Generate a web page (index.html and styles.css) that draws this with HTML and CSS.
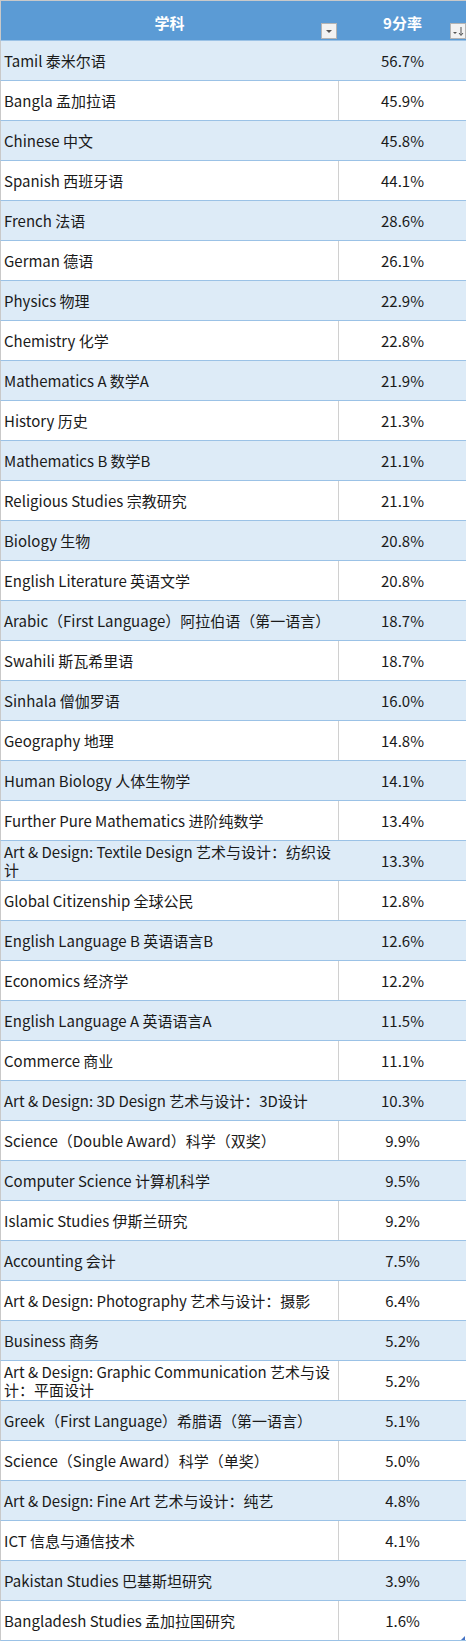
FILE: index.html
```html
<!DOCTYPE html>
<html lang="zh">
<head>
<meta charset="utf-8">
<title>9分率</title>
<link rel="stylesheet" href="styles.css">
</head>
<body>
<div class="sheet">
  <div class="head">
    <div class="hcell subj">学科
      <span class="fbtn fb1"><svg width="14" height="14" viewBox="0 0 14 14"><path d="M4 6 L10 6 L7 9 Z" fill="#555"/></svg></span>
    </div>
    <div class="hcell pct">9分率
      <span class="fbtn fb2"><svg width="14" height="14" viewBox="0 0 14 14"><path d="M2 8 L6 8 L4 10 Z" fill="#555"/><path d="M10 3 L10 11" stroke="#555" stroke-width="1"/><path d="M8 9 L10 11.5 L12 9" fill="none" stroke="#555" stroke-width="1"/></svg></span>
    </div>
  </div>
  <div class="row odd"><div class="c1">Tamil 泰米尔语</div><div class="c2">56.7%</div></div>
  <div class="row"><div class="c1">Bangla 孟加拉语</div><div class="c2">45.9%</div></div>
  <div class="row odd"><div class="c1">Chinese 中文</div><div class="c2">45.8%</div></div>
  <div class="row"><div class="c1">Spanish 西班牙语</div><div class="c2">44.1%</div></div>
  <div class="row odd"><div class="c1">French 法语</div><div class="c2">28.6%</div></div>
  <div class="row"><div class="c1">German 德语</div><div class="c2">26.1%</div></div>
  <div class="row odd"><div class="c1">Physics 物理</div><div class="c2">22.9%</div></div>
  <div class="row"><div class="c1">Chemistry 化学</div><div class="c2">22.8%</div></div>
  <div class="row odd"><div class="c1">Mathematics A 数学A</div><div class="c2">21.9%</div></div>
  <div class="row"><div class="c1">History 历史</div><div class="c2">21.3%</div></div>
  <div class="row odd"><div class="c1">Mathematics B 数学B</div><div class="c2">21.1%</div></div>
  <div class="row"><div class="c1">Religious Studies 宗教研究</div><div class="c2">21.1%</div></div>
  <div class="row odd"><div class="c1">Biology 生物</div><div class="c2">20.8%</div></div>
  <div class="row"><div class="c1">English Literature 英语文学</div><div class="c2">20.8%</div></div>
  <div class="row odd"><div class="c1">Arabic（First Language）阿拉伯语（第一语言）</div><div class="c2">18.7%</div></div>
  <div class="row"><div class="c1">Swahili 斯瓦希里语</div><div class="c2">18.7%</div></div>
  <div class="row odd"><div class="c1">Sinhala 僧伽罗语</div><div class="c2">16.0%</div></div>
  <div class="row"><div class="c1">Geography 地理</div><div class="c2">14.8%</div></div>
  <div class="row odd"><div class="c1">Human Biology 人体生物学</div><div class="c2">14.1%</div></div>
  <div class="row"><div class="c1">Further Pure Mathematics 进阶纯数学</div><div class="c2">13.4%</div></div>
  <div class="row odd"><div class="c1">Art &amp; Design: Textile Design 艺术与设计：纺织设计</div><div class="c2">13.3%</div></div>
  <div class="row"><div class="c1">Global Citizenship 全球公民</div><div class="c2">12.8%</div></div>
  <div class="row odd"><div class="c1">English Language B 英语语言B</div><div class="c2">12.6%</div></div>
  <div class="row"><div class="c1">Economics 经济学</div><div class="c2">12.2%</div></div>
  <div class="row odd"><div class="c1">English Language A 英语语言A</div><div class="c2">11.5%</div></div>
  <div class="row"><div class="c1">Commerce 商业</div><div class="c2">11.1%</div></div>
  <div class="row odd"><div class="c1">Art &amp; Design: 3D Design 艺术与设计：3D设计</div><div class="c2">10.3%</div></div>
  <div class="row"><div class="c1">Science（Double Award）科学（双奖）</div><div class="c2">9.9%</div></div>
  <div class="row odd"><div class="c1">Computer Science 计算机科学</div><div class="c2">9.5%</div></div>
  <div class="row"><div class="c1">Islamic Studies 伊斯兰研究</div><div class="c2">9.2%</div></div>
  <div class="row odd"><div class="c1">Accounting 会计</div><div class="c2">7.5%</div></div>
  <div class="row"><div class="c1">Art &amp; Design: Photography 艺术与设计：摄影</div><div class="c2">6.4%</div></div>
  <div class="row odd"><div class="c1">Business 商务</div><div class="c2">5.2%</div></div>
  <div class="row"><div class="c1">Art &amp; Design: Graphic Communication 艺术与设计：平面设计</div><div class="c2">5.2%</div></div>
  <div class="row odd"><div class="c1">Greek（First Language）希腊语（第一语言）</div><div class="c2">5.1%</div></div>
  <div class="row"><div class="c1">Science（Single Award）科学（单奖）</div><div class="c2">5.0%</div></div>
  <div class="row odd"><div class="c1">Art &amp; Design: Fine Art 艺术与设计：纯艺</div><div class="c2">4.8%</div></div>
  <div class="row"><div class="c1">ICT 信息与通信技术</div><div class="c2">4.1%</div></div>
  <div class="row odd"><div class="c1">Pakistan Studies 巴基斯坦研究</div><div class="c2">3.9%</div></div>
  <div class="row last"><div class="c1">Bangladesh Studies 孟加拉国研究</div><div class="c2">1.6%</div><span class="grip"></span></div>
</div>
</body>
</html>
```

FILE: styles.css
```css
html, body {
  margin: 0;
  padding: 0;
  background: #ffffff;
}
.sheet {
  width: 466px;
  font-family: "Noto Sans CJK SC", "Noto Sans", sans-serif;
  font-size: 15px;
  color: #1a1a1a;
}
.head {
  display: grid;
  grid-template-columns: 337px 129px;
  height: 40px;
  box-sizing: border-box;
  background: #5b9bd5;
  border-top: 1px solid #c9c9c9;
  border-left: 1px solid #c9c9c9;
  color: #ffffff;
  font-weight: bold;
  font-size: 15px;
}
.hcell {
  position: relative;
  display: flex;
  justify-content: center;
  align-items: center;
  padding-top: 4px;
}
.fbtn {
  position: absolute;
  top: 22px;
  width: 16px;
  height: 16px;
  box-sizing: border-box;
  background: #f2f2f2;
  border: 1px solid #b4b4b4;
  display: flex;
  align-items: center;
  justify-content: center;
}
.fb1 { right: 1px; }
.fb2 { right: 1px; }
.row {
  position: relative;
  display: grid;
  grid-template-columns: 337px 129px;
  height: 40px;
  box-sizing: border-box;
  border-top: 1px solid #9bc2e6;
  border-left: 1px solid #c9c9c9;
  background: #ffffff;
}
.row.odd { background: #ddebf7; }
.row.last { height: 41px; border-bottom: 1px solid #9bc2e6; }
.c1 {
  display: flex;
  align-items: center;
  padding: 0 3px;
  line-height: 18px;
  box-sizing: border-box;
}
.c2 {
  display: flex;
  align-items: center;
  justify-content: center;
  box-sizing: border-box;
  border-left: 1px solid #d0d0d0;
  border-right: 1px solid #9bc2e6;
}
.row.odd .c2 { border-left-color: #ddebf7; }
.grip {
  position: absolute;
  right: 1px;
  bottom: 0;
  width: 0;
  height: 0;
  border-left: 4px solid transparent;
  border-bottom: 4px solid #4472c4;
}
```
